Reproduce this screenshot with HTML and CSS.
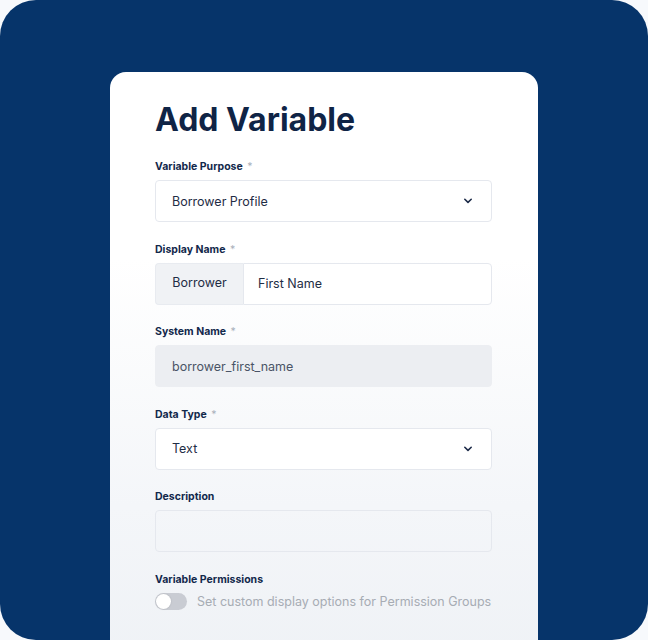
FILE: index.html
```html
<!DOCTYPE html>
<html lang="en">
<head>
  <meta charset="UTF-8">
  <meta name="viewport" content="width=device-width, initial-scale=1.0">
  <title>Add Variable</title>
  <link rel="stylesheet" href="styles.css">
</head>
<body>
  <div id="frame">
    <div id="card">
      <h1>Add Variable</h1>

      <!-- purpose -->
      <div class="field">
        <div class="label">Variable Purpose <span class="req">*</span></div>
        <div class="control select">
          <span>Borrower Profile</span>
          <svg class="chevron" width="10" height="6" viewBox="0 0 10 6"><path d="M1.8 1.3 L5 4.4 L8.2 1.3" fill="none" stroke="#1c2a48" stroke-width="1.6" stroke-linecap="round" stroke-linejoin="round"/></svg>
        </div>
      </div>

      <!-- display name -->
      <div class="field">
        <div class="label">Display Name <span class="req">*</span></div>
        <div class="group">
          <div class="prefix">Borrower</div>
          <div class="control grouped">First Name</div>
        </div>
      </div>

      <!-- system name -->
      <div class="field">
        <div class="label">System Name <span class="req">*</span></div>
        <div class="control disabled">borrower_first_name</div>
      </div>

      <!-- data type -->
      <div class="field">
        <div class="label">Data Type <span class="req">*</span></div>
        <div class="control select">
          <span>Text</span>
          <svg class="chevron" width="10" height="6" viewBox="0 0 10 6"><path d="M1.8 1.3 L5 4.4 L8.2 1.3" fill="none" stroke="#1c2a48" stroke-width="1.6" stroke-linecap="round" stroke-linejoin="round"/></svg>
        </div>
      </div>

      <!-- description -->
      <div class="field">
        <div class="label">Description</div>
        <div class="control empty"></div>
      </div>

      <!-- permissions -->
      <div class="field">
        <div class="label">Variable Permissions</div>
        <div class="switch-row">
          <div class="switch"><div class="knob"></div></div>
          <span>Set custom display options for Permission Groups</span>
        </div>
      </div>
    </div>
  </div>
</body>
</html>
```

FILE: styles.css
```css
* {
  margin: 0;
  padding: 0;
  box-sizing: border-box;
  font-family: Inter, 'Noto Sans', sans-serif;
}

body {
  background: #f7f9fc;
  width: 648px;
  height: 640px;
  overflow: hidden;
}

#frame {
  width: 648px;
  height: 640px;
  background: #06346a;
  border-radius: 36px;
  overflow: hidden;
  padding-top: 72px;
  display: flex;
  justify-content: center;
}

#card {
  width: 428px;
  height: 620px;
  flex-shrink: 0;
  background: linear-gradient(180deg, #ffffff 0%, #ffffff 30%, #f4f6f9 70%, #eef1f5 100%);
  border-radius: 16px 16px 0 0;
  padding: 29px 46px 0 45px;
}

h1 {
  font-size: 32px;
  line-height: 38px;
  font-weight: 700;
  color: #0f2446;
  margin-bottom: 21px;
}

.field {
  margin-bottom: 20.5px;
}

.label {
  font-size: 10.5px;
  line-height: 14px;
  font-weight: 700;
  color: #12284b;
  margin-bottom: 6px;
}

.req {
  color: #a9b0bb;
  font-weight: 400;
  margin-left: 2px;
}

.control {
  height: 42px;
  border: 1px solid #e5e8ee;
  border-radius: 4px;
  background: #ffffff;
  padding: 0 16px;
  display: flex;
  align-items: center;
  font-size: 12.5px;
  color: #1f2d45;
}

.select {
  justify-content: space-between;
  padding-right: 18px;
}

.group {
  display: flex;
  height: 42px;
}

.prefix {
  width: 88px;
  background: #f0f2f5;
  border: 1px solid #e8ebf0;
  border-right: none;
  border-radius: 4px 0 0 4px;
  display: flex;
  align-items: center;
  justify-content: center;
  font-size: 12.5px;
  color: #1f2d45;
  padding-bottom: 3px;
}

.grouped {
  flex: 1;
  border-radius: 0 4px 4px 0;
  padding-left: 14px;
}

.disabled {
  background: #eceef2;
  border-color: #eceef2;
  color: #4a5466;
}

.empty {
  background: transparent;
}

.switch-row {
  display: flex;
  align-items: center;
  gap: 10px;
  height: 17px;
  font-size: 12.5px;
  color: #a7acb4;
}

.switch {
  width: 32px;
  height: 17px;
  border-radius: 9px;
  background: #c9ccd3;
  position: relative;
}

.knob {
  position: absolute;
  left: 1px;
  top: 1px;
  width: 15px;
  height: 15px;
  border-radius: 50%;
  background: #ffffff;
  box-shadow: 0 0 2px rgba(0, 0, 0, 0.15);
}
```
